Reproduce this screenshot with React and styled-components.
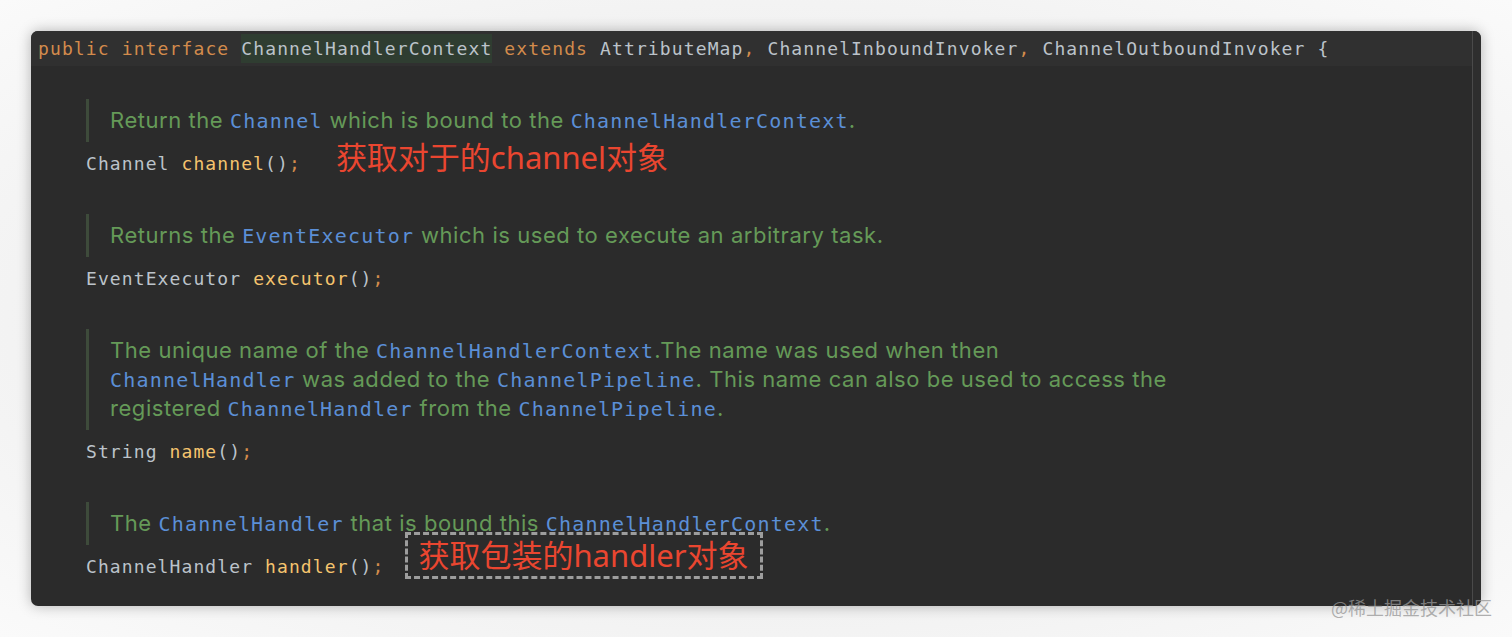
import React from 'react';
import styled, { createGlobalStyle } from 'styled-components';

const GlobalStyle = createGlobalStyle`
  html, body {
    margin: 0;
    padding: 0;
    background: #f7f7f7;
  }
`

const Page = styled.div`
  position: relative;
  width: 1512px;
  height: 637px;
  padding: 31px 0 0 31px;
  box-sizing: border-box;
  background: radial-gradient(ellipse at center, #e4e4e4 0%, #f3f3f3 70%, #fafafa 100%);
`

const Editor = styled.div`
  display: flex;
  width: 1450px;
  background: #2b2b2b;
  border-radius: 7px;
  overflow: hidden;
  box-shadow: 0 0 14px rgba(0, 0, 0, 0.28);
`

const Body = styled.div`
  flex: 1;
  padding-bottom: 25px;
`

const Gutter = styled.div`
  width: 8px;
  background: #2e2e2e;
  border-left: 1px solid #4a4a4a;
`

const mono = `
  font-family: "DejaVu Sans Mono", "Liberation Mono", monospace;
`

const HeaderRow = styled.div`
  ${mono}
  height: 35px;
  display: flex;
  align-items: center;
  padding-left: 7px;
  background: #303030;
  font-size: 18px;
  letter-spacing: 1.12px;
  color: #bcc3ca;
  white-space: pre;
`

const Kw = styled.span`
  color: #d38b4c;
`

const Ident = styled.span`
  color: #bcc3ca;
  background: ${p => (p.$hl ? '#2f3d31' : 'transparent')};
  padding: ${p => (p.$hl ? '4px 0' : '0')};
`

const Method = styled.span`
  color: #f5c46e;
`

const Member = styled.section`
  padding-left: 55px;
  margin-top: ${p => (p.$first ? '33px' : '36px')};
`

const Doc = styled.div`
  border-left: 3px solid #3e4b3b;
  padding: 7px 0 7px 21px;
`

const DocLine = styled.div`
  font-family: Inter, "Noto Sans", sans-serif;
  font-size: 22px;
  letter-spacing: 0.55px;
  line-height: 29px;
  height: 29px;
  color: #659a58;
  white-space: pre;
`

const Link = styled.span`
  ${mono}
  font-size: 20px;
  line-height: 1;
  letter-spacing: 1.2px;
  color: #5b8fd6;
`

const CodeLine = styled.div`
  ${mono}
  height: 30px;
  margin-top: 6px;
  display: flex;
  align-items: center;
  font-size: 18px;
  letter-spacing: 1.1px;
  color: #bcc3ca;
  white-space: pre;
`

const Note = styled.span`
  font-family: "Noto Sans", "Noto Sans CJK SC", sans-serif;
  font-size: 31px;
  line-height: 41px;
  letter-spacing: 0;
  color: #ea4630;
  margin-left: ${p => (p.$boxed ? '21px' : '35px')};
  margin-bottom: ${p => (p.$boxed ? '22px' : '12px')};
  padding: ${p => (p.$boxed ? '0 11px 0 10px' : '0')};
  border: ${p => (p.$boxed ? '3px dashed #9d9d9d' : 'none')};
`

const Watermark = styled.div`
  position: absolute;
  right: 20px;
  top: 594px;
  font-family: "Noto Sans CJK SC", sans-serif;
  font-size: 18px;
  color: rgba(150, 150, 150, 0.75);
`

const Sig = ({ type, name, note, boxed }) => (
  <CodeLine>
    {type} <Method>{name}</Method>()<Kw>;</Kw>
    {note && <Note $boxed={boxed}>{note}</Note>}
  </CodeLine>
)

export default function App() {
  return (
    <Page>
      <GlobalStyle />
      <Editor>
        <Body>
          <HeaderRow>
            <Kw>public interface </Kw>
            <Ident $hl>ChannelHandlerContext</Ident>
            <Kw> extends </Kw>
            AttributeMap<Kw>, </Kw>ChannelInboundInvoker<Kw>, </Kw>ChannelOutboundInvoker {'{'}
          </HeaderRow>

          <Member $first>
            <Doc>
              <DocLine>
                Return the <Link>Channel</Link> which is bound to the <Link>ChannelHandlerContext</Link>.
              </DocLine>
            </Doc>
            <Sig type="Channel" name="channel" note="获取对于的channel对象" />
          </Member>

          <Member>
            <Doc>
              <DocLine>
                Returns the <Link>EventExecutor</Link> which is used to execute an arbitrary task.
              </DocLine>
            </Doc>
            <Sig type="EventExecutor" name="executor" />
          </Member>

          <Member>
            <Doc>
              <DocLine>
                The unique name of the <Link>ChannelHandlerContext</Link>.The name was used when then
              </DocLine>
              <DocLine>
                <Link>ChannelHandler</Link> was added to the <Link>ChannelPipeline</Link>. This name can also be used to access the
              </DocLine>
              <DocLine>
                registered <Link>ChannelHandler</Link> from the <Link>ChannelPipeline</Link>.
              </DocLine>
            </Doc>
            <Sig type="String" name="name" />
          </Member>

          <Member>
            <Doc>
              <DocLine>
                The <Link>ChannelHandler</Link> that is bound this <Link>ChannelHandlerContext</Link>.
              </DocLine>
            </Doc>
            <Sig type="ChannelHandler" name="handler" note="获取包装的handler对象" boxed />
          </Member>
        </Body>
        <Gutter />
      </Editor>
      <Watermark>@稀土掘金技术社区</Watermark>
    </Page>
  )
}
